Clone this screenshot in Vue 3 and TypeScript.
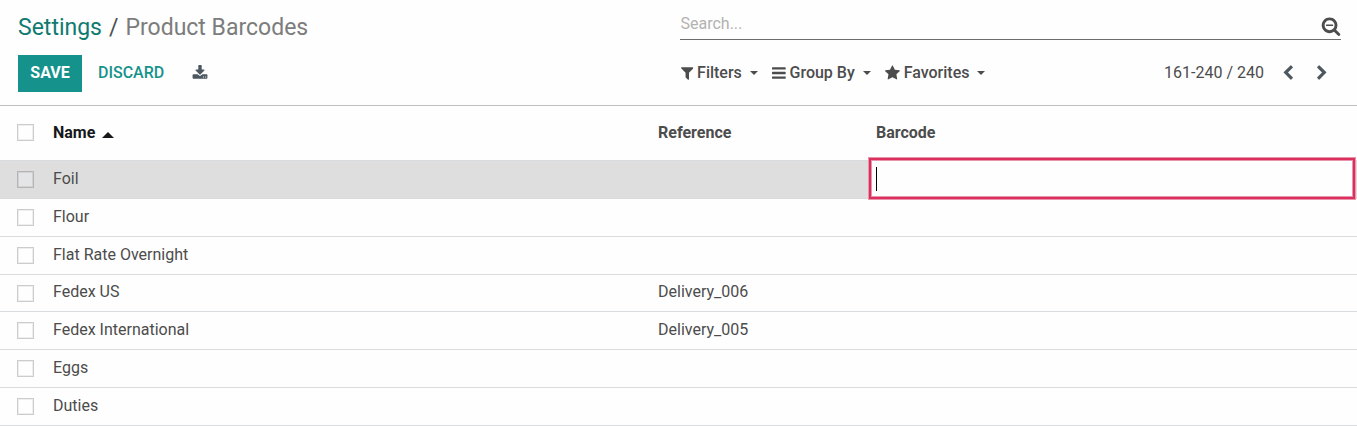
<script setup lang="ts">
import { ref } from 'vue'

interface Product {
  name: string
  reference: string
  barcode: string
  selected: boolean
}

const make = (name: string, reference = ''): Product => ({ name, reference, barcode: '', selected: false })

const products = ref<Product[]>([
  make('Foil'),
  make('Flour'),
  make('Flat Rate Overnight'),
  make('Fedex US', 'Delivery_006'),
  make('Fedex International', 'Delivery_005'),
  make('Eggs'),
  make('Duties'),
])

const editing = ref(0)
const search = ref('')
const allSelected = ref(false)

const menus = [
  {
    label: 'Filters',
    viewBox: '192 0 1408 1792',
    icon: 'M1595 295q17 41-14 70l-493 493v742q0 42-39 59-13 5-25 5-27 0-45-19l-256-256q-19-19-19-45v-486l-493-493q-31-29-14-70 17-39 59-39h1280q42 0 59 39z',
  },
  {
    label: 'Group By',
    viewBox: '128 0 1536 1792',
    icon: 'M1664 1344v128q0 26-19 45t-45 19h-1408q-26 0-45-19t-19-45v-128q0-26 19-45t45-19h1408q26 0 45 19t19 45zm0-512v128q0 26-19 45t-45 19h-1408q-26 0-45-19t-19-45v-128q0-26 19-45t45-19h1408q26 0 45 19t19 45zm0-512v128q0 26-19 45t-45 19h-1408q-26 0-45-19t-19-45v-128q0-26 19-45t45-19h1408q26 0 45 19t19 45z',
  },
  {
    label: 'Favorites',
    viewBox: '64 0 1664 1792',
    icon: 'M1728 647q0 22-26 48l-363 354 86 500q1 7 1 20 0 21-10.5 35.5t-30.5 14.5q-19 0-40-12l-449-236-449 236q-22 12-40 12-21 0-31.5-14.5t-10.5-35.5q0-6 2-20l86-500-364-354q-25-27-25-48 0-37 56-46l502-73 225-455q19-41 49-41t49 41l225 455 502 73q56 9 56 46z',
  },
]

function toggleAll() {
  products.value.forEach((p) => (p.selected = allSelected.value))
}
</script>

<template>
  <main class="page">
    <header class="panel">
      <nav class="crumbs" aria-label="Breadcrumb">
        <a href="#settings">Settings</a>
        <span class="slash">/</span>
        <span class="current">Product Barcodes</span>
      </nav>

      <div class="search">
        <input v-model="search" type="text" placeholder="Search..." aria-label="Search" />
        <button type="button" class="plain" aria-label="Hide search options">
          <svg class="magnifier" viewBox="0 0 1792 1792"><path d="M1088 800v64q0 13-9.500 22.500t-22.500 9.500h-576q-13 0-22.500-9.500t-9.500-22.500v-64q0-13 9.500-22.500t22.500-9.500h576q13 0 22.500 9.500t9.500 22.500zm128 32q0-185-131.500-316.500t-316.500-131.500-316.500 131.500-131.500 316.500 131.500 316.500 316.500 131.500 316.500-131.500 131.500-316.500zm512 832q0 53-37.500 90.500t-90.500 37.500q-54 0-90-38l-343-342q-179 124-399 124-143 0-273.500-55.500t-225-150-150-225-55.500-273.500 55.500-273.500 150-225 225-150 273.500-55.500 273.500 55.500 225 150 150 225 55.500 273.500q0 220-124 399l343 343q37 37 37 90z" /></svg>
        </button>
      </div>

      <div class="actions">
        <button type="button" class="save">SAVE</button>
        <button type="button" class="discard">DISCARD</button>
        <button type="button" class="plain export" aria-label="Export">
          <svg viewBox="0 0 1792 1792"><path d="M1344 1344q0-26-19-45t-45-19-45 19-19 45 19 45 45 19 45-19 19-45zm256 0q0-26-19-45t-45-19-45 19-19 45 19 45 45 19 45-19 19-45zm128-224v320q0 40-28 68t-68 28h-1472q-40 0-68-28t-28-68v-320q0-40 28-68t68-28h465l135 136q58 56 136 56t136-56l136-136h464q40 0 68 28t28 68zm-325-569q17 41-14 70l-448 448q-18 19-45 19t-45-19l-448-448q-31-29-14-70 17-39 59-39h256v-448q0-26 19-45t45-19h256q26 0 45 19t19 45v448h256q42 0 59 39z" /></svg>
        </button>
      </div>

      <div class="tools">
        <div class="menus">
          <button v-for="menu in menus" :key="menu.label" type="button" class="plain menu">
            <svg :viewBox="menu.viewBox"><path :d="menu.icon" /></svg>
            <span>{{ menu.label }}</span>
            <i class="down"></i>
          </button>
        </div>
        <div class="pager">
          <span>161-240 / 240</span>
          <button type="button" class="plain" aria-label="Previous">
            <svg viewBox="0 0 1792 1792"><path d="M1427 301l-531 531 531 531q19 19 19 45t-19 45l-166 166q-19 19-45 19t-45-19l-742-742q-19-19-19-45t19-45l742-742q19-19 45-19t45 19l166 166q19 19 19 45t-19 45z" /></svg>
          </button>
          <button type="button" class="plain" aria-label="Next">
            <svg viewBox="0 0 1792 1792"><path d="M1363 877l-742 742q-19 19-45 19t-45-19l-166-166q-19-19-19-45t19-45l531-531-531-531q-19-19-19-45t19-45l166-166q19-19 45-19t45 19l742 742q19 19 19 45t-19 45z" /></svg>
          </button>
        </div>
      </div>
    </header>

    <table>
      <colgroup>
        <col class="col-check" />
        <col />
        <col class="col-reference" />
        <col class="col-barcode" />
      </colgroup>
      <thead>
        <tr>
          <th class="check"><input v-model="allSelected" type="checkbox" aria-label="Select all" @change="toggleAll" /></th>
          <th class="sorted" aria-sort="ascending">Name<i class="up"></i></th>
          <th>Reference</th>
          <th>Barcode</th>
        </tr>
      </thead>
      <tbody>
        <tr v-for="(product, index) in products" :key="product.name" :class="{ editing: index === editing }">
          <td class="check"><input v-model="product.selected" type="checkbox" :aria-label="'Select ' + product.name" /></td>
          <td>{{ product.name }}</td>
          <td>{{ product.reference }}</td>
          <td v-if="index === editing" class="edit">
            <input v-model="product.barcode" type="text" aria-label="Barcode" />
            <i v-if="!product.barcode" class="cursor"></i>
          </td>
          <td v-else>{{ product.barcode }}</td>
        </tr>
      </tbody>
    </table>
  </main>
</template>

<style>
body {
  background: #fefefe;
}
</style>

<style scoped>
.page {
  font-family: Roboto, "Liberation Sans", sans-serif;
  font-size: 16px;
  line-height: 24px;
  color: #4c4c4c;
}

.page * {
  box-sizing: border-box;
}

button,
input {
  margin: 0;
  padding: 0;
  border: 0;
  background: none;
  font: inherit;
  color: inherit;
}

svg {
  display: block;
  flex: none;
  width: 16px;
  height: 16px;
  fill: currentColor;
}

.panel {
  display: grid;
  grid-template-columns: 1fr 1fr;
  grid-template-rows: 40px 37px;
  row-gap: 15px;
  padding: 0 16px 13px 18px;
  border-bottom: 1px solid #bfbfbf;
}

.crumbs {
  display: flex;
  gap: 7px;
  padding-top: 12px;
  font-size: 23px;
  line-height: 32px;
}

.crumbs a {
  color: #0f7a70;
  text-decoration: none;
}

.current {
  color: #7c7c7c;
}

.search {
  display: flex;
  align-items: flex-end;
  border-bottom: 1px solid #6c6c6c;
}

.search input {
  flex: 1;
  min-width: 0;
  height: 32px;
  padding: 0 1px;
  outline: none;
}

.search input::placeholder {
  color: #b2b2b2;
  opacity: 1;
}

.magnifier {
  width: 20px;
  height: 20px;
  margin-bottom: 3px;
}

.actions,
.tools,
.menus,
.menu,
.pager {
  display: flex;
  align-items: center;
}

.save,
.discard {
  height: 37px;
  padding: 0 12px 2px;
  font-weight: 500;
  color: #16928c;
}

.save {
  min-width: 64px;
  margin-right: 4px;
  background: #16928c;
  color: #ffffff;
  font-weight: 700;
}

.export {
  margin-left: 16px;
  padding-bottom: 1px;
  color: #4c5760;
}

.tools {
  justify-content: space-between;
  padding-bottom: 2px;
}

.menus {
  gap: 14px;
  padding-left: 1px;
}

.menu {
  font-weight: 500;
}

.menu svg {
  width: auto;
}

.menu span {
  margin: 0 8px 0 4px;
}

.down,
.up {
  display: inline-block;
  border: 4px solid transparent;
}

.down {
  border-top-color: currentColor;
  border-bottom: 0;
}

.up {
  margin-left: 7px;
  border-width: 6px;
  border-top: 0;
  border-bottom-color: currentColor;
}

.pager {
  gap: 18px;
  padding-right: 11px;
}

.pager span {
  margin-right: -2px;
}

.pager svg {
  color: #4c5760;
}

table {
  width: 100%;
  table-layout: fixed;
  border-collapse: separate;
  border-spacing: 0;
}

.col-check {
  width: 45px;
}

.col-reference {
  width: 218px;
}

.col-barcode {
  width: 489px;
}

th,
td {
  height: 38px;
  padding: 0 8px;
  border-bottom: 1px solid #d8dcdf;
  text-align: left;
  vertical-align: middle;
}

td {
  padding-bottom: 2px;
}

th {
  height: 55px;
  font-weight: 700;
}

tbody tr:nth-child(4n) td {
  height: 37px;
}

.sorted {
  color: #16181b;
}

.check {
  padding: 0 0 0 17px;
}

th.check {
  padding-bottom: 2px;
}

.check input {
  display: block;
  appearance: none;
  width: 17px;
  height: 17px;
  border: 1px solid #cccccc;
  background: #fefefe;
  box-shadow: inset 0 0 0 1px #eeeeee;
}

.check input:checked {
  background: #16928c;
}

.editing td {
  background: #dedede;
}

.editing .check input {
  border-color: #b5b5b5;
  background: #e4e5e7;
  box-shadow: inset 0 0 0 1px #d2d2d3;
}

.edit {
  position: relative;
}

.edit input {
  position: absolute;
  top: -3px;
  left: 1px;
  width: calc(100% - 3px);
  height: 41px;
  padding: 0 5px;
  border: 2px solid #dd2f5e;
  background: #fefefe;
  box-shadow: 0 0 0 1px #e795ab, inset 0 0 0 1px #e795ab;
  outline: none;
  caret-color: transparent;
}

.cursor {
  position: absolute;
  top: 6px;
  left: 8px;
  width: 1px;
  height: 24px;
  background: #000000;
}
</style>
